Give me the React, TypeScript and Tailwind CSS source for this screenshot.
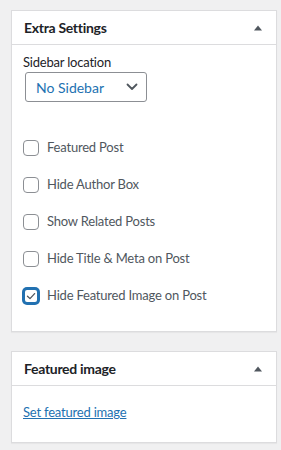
import React from "react";

const font = { fontFamily: 'Lato, "Noto Sans", sans-serif' };

function Checkbox({ checked }: { checked?: boolean }) {
  if (checked) {
    return (
      <span className="box-border flex h-4 w-4 shrink-0 items-center justify-center rounded-[4px] border-2 border-[#2271b1] bg-white shadow-[0_0_0_1px_#2271b1]">
        <svg width="12" height="12" viewBox="0 0 12 12" fill="none">
          <path d="M2.5 6.2 L5 8.6 L9.6 3.6" stroke="#50575e" strokeWidth="1.3" strokeLinecap="round" strokeLinejoin="round" />
        </svg>
      </span>
    );
  }
  return <span className="box-border block h-4 w-4 shrink-0 rounded-[4px] border border-[#8c8f94] bg-white" />;
}

function Row({ label, checked }: { label: string; checked?: boolean }) {
  return (
    <div className="flex h-[37px] items-center gap-[8px]">
      <Checkbox checked={checked} />
      <span className="text-[13px] tracking-[-0.2px] text-[#50575e]">{label}</span>
    </div>
  );
}

function Header({ title }: { title: string }) {
  return (
    <div className="flex h-[34px] items-center justify-between border-b border-[#dcdcde] pl-[12px] pr-[14px]">
      <span className="text-[14px] font-bold tracking-[-0.3px] text-[#1d2327]">{title}</span>
      <svg width="8" height="6" viewBox="0 0 8 6">
        <path d="M0 5.5 L4 0.5 L8 5.5 Z" fill="#50575e" />
      </svg>
    </div>
  );
}

export default function App() {
  return (
    <div className="min-h-[450px] w-[281px] bg-[#f0f0f1] pl-[11px] pr-[4px] pt-[10px]" style={font}>
      <div className="border border-[#dcdcde] bg-white shadow-[0_1px_1px_rgba(0,0,0,0.04)]">
        <Header title="Extra Settings" />
        <div className="px-[11px] pb-[17px] pt-[8px]">
          <div className="text-[13px] leading-[18px] tracking-[-0.2px] text-[#1d2327]">Sidebar location</div>
          <div className="ml-[2px] mt-[1px] flex h-[30px] w-[122px] items-center justify-between rounded-[3px] border border-[#8c8f94] pl-[10px] pr-[8px]">
            <span className="text-[14px] text-[#2271b1]">No Sidebar</span>
            <svg width="12" height="8" viewBox="0 0 12 8" fill="none">
              <path d="M1.5 1.5 L6 6 L10.5 1.5" stroke="#50575e" strokeWidth="1.8" strokeLinecap="round" strokeLinejoin="round" />
            </svg>
          </div>
          <div className="mt-[27px]">
            <Row label="Featured Post" />
            <Row label="Hide Author Box" />
            <Row label="Show Related Posts" />
            <Row label="Hide Title & Meta on Post" />
            <Row label="Hide Featured Image on Post" checked />
          </div>
        </div>
      </div>
      <div className="mt-[19px] border border-[#dcdcde] bg-white shadow-[0_1px_1px_rgba(0,0,0,0.04)]">
        <Header title="Featured image" />
        <div className="px-[11px] pb-[19px] pt-[13px]">
          <a href="#" className="text-[13px] leading-[20px] tracking-[-0.2px] text-[#2271b1] underline">Set featured image</a>
        </div>
      </div>
    </div>
  );
}
